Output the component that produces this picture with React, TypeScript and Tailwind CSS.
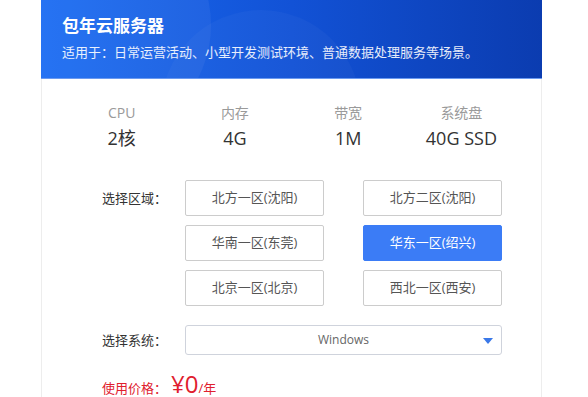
const font = { fontFamily: '"Open Sans", "Noto Sans CJK SC", sans-serif' };

const specs = [
  { label: "CPU", value: "2核" },
  { label: "内存", value: "4G" },
  { label: "带宽", value: "1M" },
  { label: "系统盘", value: "40G SSD" },
];

const regions = [
  "北方一区(沈阳)",
  "北方二区(沈阳)",
  "华南一区(东莞)",
  "华东一区(绍兴)",
  "北京一区(北京)",
  "西北一区(西安)",
];

export default function App() {
  return (
    <div className="h-[397px] w-[588px] overflow-hidden bg-white" style={font}>
      <div className="ml-[41px] w-[501px]">
        <div className="relative h-[79px] overflow-hidden border-b border-[#6b9af0] bg-linear-to-r from-[#1b6cf2] via-[#1252d6] to-[#0b3cb0] pl-[21px] pt-[15px]">
          <div className="absolute -left-[60px] -top-[90px] h-[230px] w-[230px] rounded-full bg-white/5" />
          <div className="absolute left-[120px] top-[10px] h-[200px] w-[200px] rounded-full bg-white/[0.03]" />
          <h1 className="relative text-[17px] font-bold leading-[22px] text-white">包年云服务器</h1>
          <p className="relative mt-[5px] text-[13px] leading-[20px] text-white/90">
            适用于：日常运营活动、小型开发测试环境、普通数据处理服务等场景。
          </p>
        </div>

        <div className="border-x border-[#ededed] pb-6 pt-[24px]">
          <div className="mx-[23px] grid grid-cols-4">
            {specs.map((s) => (
              <div key={s.label} className="flex flex-col items-center">
                <span className="text-[14px] leading-[20px] text-[#9a9a9a]">{s.label}</span>
                <span className="mt-[2px] text-[18px] leading-[26px] text-[#333]">{s.value}</span>
              </div>
            ))}
          </div>

          <div className="mt-[29px] flex pl-[60px]">
            <div className="w-[83px] pt-[7px] text-[13px] leading-[22px] text-[#333]">选择区域：</div>
            <div className="grid grid-cols-[139px_139px] gap-x-[39px] gap-y-[9px]">
              {regions.map((r) => (
                <Region key={r} name={r} active={r === "华东一区(绍兴)"} />
              ))}
            </div>
          </div>

          <div className="mt-[19px] flex items-center pl-[60px]">
            <div className="w-[83px] text-[13px] leading-[22px] text-[#333]">选择系统：</div>
            <div className="relative flex h-[30px] w-[317px] items-center justify-center rounded-[3px] border border-[#cfd3dc] text-[12px] text-[#666]">
              Windows
              <svg className="absolute right-[8px] top-[12px]" width="10" height="6" viewBox="0 0 10 6">
                <path d="M0 0h10L5 6z" fill="#3a78e8" />
              </svg>
            </div>
          </div>

          <div className="mt-[16px] flex items-baseline pl-[60px] text-[#e0202e]">
            <span className="text-[13px]">使用价格：</span>
            <span className="ml-[4px] text-[24px] leading-[26px]">¥0</span>
            <span className="text-[13px]">/年</span>
          </div>
        </div>
      </div>
    </div>
  );
}

function Region({ name, active }: { name: string; active: boolean }) {
  return (
    <div
      className={
        active
          ? "flex h-9 items-center justify-center rounded-[2px] border border-[#3b7cf6] bg-[#3b7cf6] text-[13px] text-white"
          : "flex h-9 items-center justify-center rounded-[2px] border border-[#cccccc] bg-white text-[13px] text-[#555]"
      }
    >
      {name}
    </div>
  );
}
